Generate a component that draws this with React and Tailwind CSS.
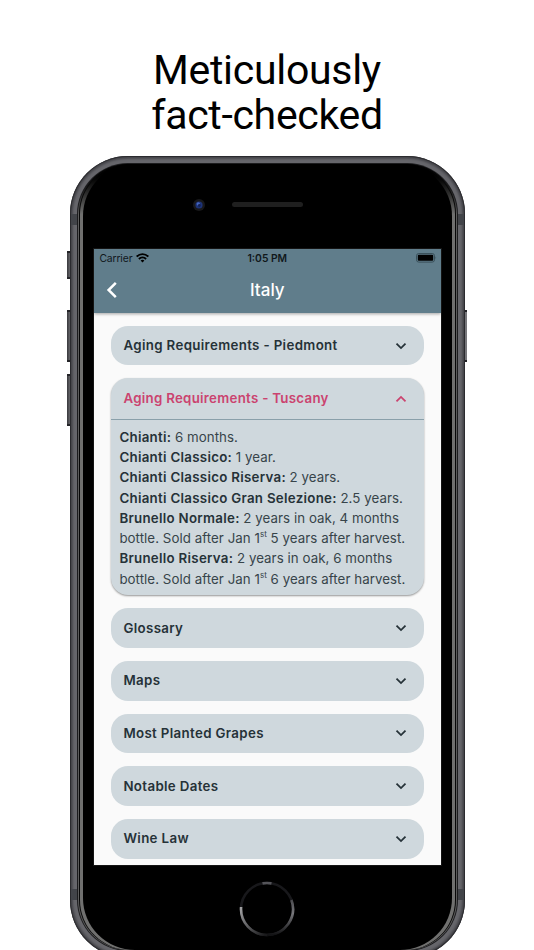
import React from "react";

function Chevron({ up, color }) {
  return (
    <svg width="12" height="8" viewBox="0 0 12 8" fill="none" className="mr-[16.5px]">
      <path d={up ? "M1.5 6.4 L6 1.9 L10.5 6.4" : "M1.5 1.6 L6 6.1 L10.5 1.6"} stroke={color} strokeWidth="1.8" />
    </svg>
  );
}

function Section({ title }) {
  return (
    <div className="mb-[13px] flex h-[39.7px] shrink-0 items-center justify-between rounded-[17px] bg-[#cfd8dd] pl-[12.5px] text-[#263238]">
      <span className="pt-[1px] text-[13.3px] font-semibold tracking-[0.35px]">{title}</span>
      <Chevron color="#263238" />
    </div>
  );
}

function Line({ label, children }) {
  return (
    <div className="h-[20.25px] whitespace-nowrap">
      {label && <b className="font-semibold tracking-[0.29px] text-[#263238]">{label} </b>}
      {children}
    </div>
  );
}

function St() {
  return <sup className="relative -top-[6px] align-baseline text-[8px] leading-none tracking-normal">st</sup>;
}

function StatusBar() {
  return (
    <div className="relative flex h-[18.5px] items-center justify-between pl-[5.5px] pr-[4px] text-[10.3px] text-[#10181c]">
      <span className="flex items-center gap-[3.5px]">
        <span className="tracking-[-0.1px]">Carrier</span>
        <svg width="13" height="10" viewBox="0 0 13 10" fill="none" stroke="#000" strokeWidth="1.9">
          <path d="M0.7 3.7 C4 0.3 9 0.3 12.3 3.7" />
          <path d="M2.9 6 C5 4 8 4 10.1 6" />
          <path d="M6.5 9.4 L4.6 7.5 C5.6 6.5 7.4 6.5 8.4 7.5 Z" fill="#000" stroke="none" />
        </svg>
      </span>
      <span className="absolute left-0 w-full text-center font-semibold">1:05 PM</span>
      <svg width="21" height="10" viewBox="0 0 21 10">
        <rect x="0.5" y="0.5" width="18" height="8.6" rx="2.3" fill="none" stroke="#3a505a" />
        <rect x="1.8" y="1.8" width="15.4" height="6" rx="1" fill="#000" />
        <path d="M19.6 3.3 Q20.7 4.8 19.6 6.3Z" fill="#334850" />
      </svg>
    </div>
  );
}

function Screen() {
  return (
    <div className="ml-[11.4px] flex h-[616px] w-[346.8px] flex-col overflow-hidden bg-[#fafafa] font-['Inter',sans-serif] outline outline-[#141414]">
      <header className="z-10 h-[64px] shrink-0 bg-[#607d8b] shadow-[0_1px_3px_rgba(0,0,0,0.35)]">
        <StatusBar />
        <div className="relative flex h-[45px] items-center justify-center text-white">
          <svg width="12" height="18" viewBox="0 0 12 18" fill="none" className="absolute left-[12.5px] top-[13px]">
            <path d="M9.8 1.8 L2.6 9 L9.8 16.2" stroke="#fff" strokeWidth="2.5" />
          </svg>
          <h2 className="pt-[1px] text-[17px] font-medium">Italy</h2>
        </div>
      </header>
      <main className="flex grow flex-col overflow-hidden px-[17px] pt-[12.5px]">
        <Section title="Aging Requirements - Piedmont" />
        <div className="mb-[13px] flex h-[216.8px] shrink-0 flex-col rounded-[17px] bg-[#cfd8dd] shadow-[0_1px_2px_rgba(0,0,0,0.4)]">
          <div className="flex h-[41.3px] shrink-0 items-center justify-between border-b border-[#8aa0aa] pl-[12.5px] text-[#cb436f]">
            <span className="pt-[1px] text-[13.3px] font-semibold tracking-[0.28px]">Aging Requirements - Tuscany</span>
            <Chevron up color="#cb436f" />
          </div>
          <div className="pl-[8.5px] pt-[7.3px] text-[13.3px] leading-[20.25px] tracking-[0.05px] text-[#37444a]">
            <Line label="Chianti:">6 months.</Line>
            <Line label="Chianti Classico:">1 year.</Line>
            <Line label="Chianti Classico Riserva:">2 years.</Line>
            <Line label="Chianti Classico Gran Selezione:">2.5 years.</Line>
            <Line label="Brunello Normale:">2 years in oak, 4 months</Line>
            <Line>bottle. Sold after Jan 1<St /> 5 years after harvest.</Line>
            <Line label="Brunello Riserva:">2 years in oak, 6 months</Line>
            <Line>bottle. Sold after Jan 1<St /> 6 years after harvest.</Line>
          </div>
        </div>
        <Section title="Glossary" />
        <Section title="Maps" />
        <Section title="Most Planted Grapes" />
        <Section title="Notable Dates" />
        <Section title="Wine Law" />
      </main>
    </div>
  );
}

function HomeButton() {
  return (
    <svg width="56" height="56" viewBox="0 0 56 56" fill="none" strokeWidth="2.6" className="mx-auto mt-[15.8px]">
      <defs>
        <linearGradient id="ringLeft" x1="0" y1="26" x2="26" y2="54" gradientUnits="userSpaceOnUse">
          <stop stopColor="#a9a9ab" />
          <stop offset="1" stopColor="#19191b" />
        </linearGradient>
        <linearGradient id="ringRight" x1="0" y1="18" x2="0" y2="54" gradientUnits="userSpaceOnUse">
          <stop stopColor="#47474b" />
          <stop offset="0.4" stopColor="#77777b" />
          <stop offset="1" stopColor="#111113" />
        </linearGradient>
      </defs>
      <circle cx="28" cy="28" r="26" stroke="#18181b" />
      <path d="M2.1 26 A26 26 0 0 0 28 54" stroke="url(#ringLeft)" />
      <path d="M52.4 19 A26 26 0 0 1 28 54" stroke="url(#ringRight)" />
      <path d="M23.5 2.4 A26 26 0 0 1 32.5 2.4" stroke="#545459" />
    </svg>
  );
}

const sideButton = "absolute border-y-2 border-[#242428] bg-linear-to-r";

function Phone() {
  return (
    <div className="relative mx-auto mt-[18px] h-[802px] w-[395px]">
      <div className={`${sideButton} -left-[3px] top-[95px] h-[28px] w-[4px] from-[#38383c] to-[#77777b]`} />
      <div className={`${sideButton} -left-[3px] top-[154px] h-[52px] w-[4px] from-[#38383c] to-[#77777b]`} />
      <div className={`${sideButton} -left-[3px] top-[218px] h-[52px] w-[4px] from-[#38383c] to-[#77777b]`} />
      <div className={`${sideButton} -right-[2px] top-[154px] h-[52px] w-[4px] from-[#77777b] to-[#77777b]`} />
      <div className="relative h-full overflow-hidden rounded-[58px] bg-[#66666b] p-[7px] shadow-[inset_0_0_1px_1px_#29292c,inset_0_0_2px_3px_#4a4a4f]">
        <div className="absolute left-[1px] top-[58px] h-[11px] w-[6px] bg-[#424449]" />
        <div className="absolute right-[1px] top-[58px] h-[11px] w-[6px] bg-[#424449]" />
        <div className="absolute left-[1px] top-[733px] h-[11px] w-[6px] bg-[#424449]" />
        <div className="absolute right-[1px] top-[733px] h-[11px] w-[6px] bg-[#424449]" />
        <div className="h-full rounded-[51px] bg-[#1c1c1e] px-[1px] py-[1px]">
          <div className="h-full rounded-[50px] bg-linear-to-b from-black from-[2px] via-[#5c5c5c] via-[50px] to-[#5c5c5c] px-[1px]">
            <div className="h-full rounded-[50px] bg-[#080808] px-[1px]">
              <div className="h-full rounded-[50px] bg-linear-to-b from-black from-[5px] via-[#70706f] via-[50px] to-[#70706f] px-[3px]">
                <div className="flex h-full flex-col rounded-[52px] bg-black">
                  <div className="relative h-[85.2px] shrink-0">
                    <svg width="12" height="12" viewBox="0 0 12 12" className="absolute left-[110px] top-[35px]">
                      <circle cx="6" cy="6" r="6" fill="#18181a" />
                      <circle cx="6" cy="6" r="3.6" fill="#1d3377" />
                      <circle cx="5.3" cy="5" r="1.7" fill="#4565bd" />
                      <circle cx="6.4" cy="6.5" r="1.4" fill="#142355" />
                    </svg>
                    <div className="absolute left-[149px] top-[37.5px] h-[5px] w-[71px] rounded-full bg-[#1f1f1f]" />
                  </div>
                  <Screen />
                  <HomeButton />
                </div>
              </div>
            </div>
          </div>
        </div>
      </div>
    </div>
  );
}

export default function App() {
  return (
    <div className="h-[950px] w-[534px] overflow-hidden bg-white">
      <h1 className="pt-[48px] text-center font-['Roboto',sans-serif] text-[41px] leading-[45px] tracking-[-0.3px] text-black">
        Meticulously
        <br />
        fact-checked
      </h1>
      <Phone />
    </div>
  );
}
